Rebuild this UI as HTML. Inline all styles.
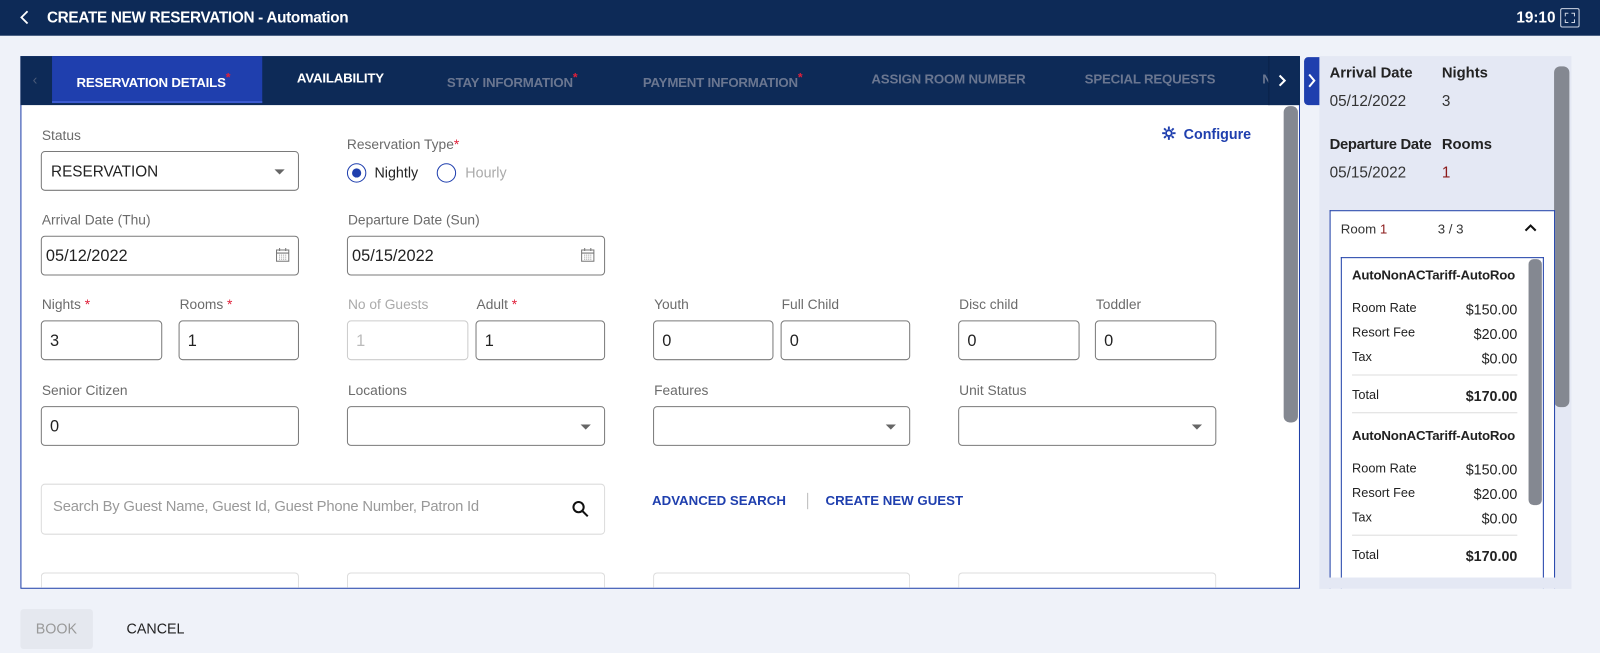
<!DOCTYPE html>
<html><head><style>
*{box-sizing:border-box;margin:0;padding:0}
body{width:1600px;height:653px;background:#eff2f9;font-family:"Liberation Sans",sans-serif;position:relative;overflow:hidden;color:#222}
#w{position:absolute;left:0;top:0;width:1568px;height:640px;transform:scale(1.0204);transform-origin:0 0}
.a{position:absolute}
.hdr{left:0;top:0;width:1600px;height:35px;background:#0d2a57}
.lbl{position:absolute;font-size:13.5px;color:#6b6b6b;white-space:nowrap;margin-top:1px}
.req{color:#e0203a}
.inp{position:absolute;height:39px;border:1px solid #7a7a7a;border-radius:4px;background:#fff;font-size:16px;padding:11px 8px 0;color:#222}
.dd:after{content:"";position:absolute;right:13px;top:17px;border:5px solid transparent;border-top:5px solid #666}
.tab{position:absolute;top:69px;font-size:13px;font-weight:bold;color:#6a7690;white-space:nowrap;letter-spacing:-0.2px}
.tab sup{color:#e0203a;font-size:12px}
.row{display:flex;justify-content:space-between;font-size:12.5px;color:#222;margin-bottom:8px}
</style></head><body><div id="w">
<div class="a hdr"></div>
<svg class="a" style="left:18px;top:9px" width="12" height="16"><path d="M9 2L3 8l6 6" stroke="#fff" stroke-width="1.8" fill="none"/></svg>
<div class="a" style="left:46px;top:9px;color:#fff;font-size:15px;font-weight:bold;letter-spacing:-0.3px">CREATE NEW RESERVATION - Automation</div>
<div class="a" style="left:1486px;top:9px;color:#fff;font-size:15px;font-weight:bold">19:10</div>
<div class="a" style="left:1529px;top:8px;width:19px;height:19px;border:1px solid #cfd6e4;border-radius:2px"></div>
<svg class="a" style="left:1533px;top:12px" width="11" height="11"><path d="M1 4V1h3M7 1h3v3M10 7v3H7M4 10H1V7" stroke="#cfd6e4" stroke-width="1" fill="none"/></svg>

<div class="a" style="left:20px;top:55px;width:1254px;height:522px;border:1px solid #1e3fa8;background:#fff"></div>
<div class="a" style="left:20px;top:55px;width:1254px;height:48px;background:#0d2a57"></div>
<div class="a" style="left:32px;top:70px;color:#4a5a78;font-size:14px">‹</div>
<div class="a" style="left:51px;top:55px;width:206px;height:46px;background:#1f3fae;border-bottom:2px solid #3c5bd0"></div>
<div class="tab" style="left:75px;color:#fff">RESERVATION DETAILS<sup>*</sup></div>
<div class="tab" style="left:291px;top:69px;color:#fff">AVAILABILITY</div>
<div class="tab" style="left:438px">STAY INFORMATION<sup>*</sup></div>
<div class="tab" style="left:630px">PAYMENT INFORMATION<sup>*</sup></div>
<div class="tab" style="left:854px;top:70px">ASSIGN ROOM NUMBER</div>
<div class="tab" style="left:1063px;top:70px">SPECIAL REQUESTS</div>
<div class="tab" style="left:1237px;top:70px">N</div>
<div class="a" style="left:1243px;top:55px;width:30px;height:48px;background:#0d2a57;border-left:1px solid #0a2248"></div>
<svg class="a" style="left:1252px;top:72px" width="10" height="14"><path d="M2 2l5 5-5 5" stroke="#fff" stroke-width="2" fill="none"/></svg>
<div class="a" style="left:1258px;top:104px;width:14px;height:310px;background:#848891;border-radius:6px"></div>

<div class="lbl" style="left:41px;top:124px">Status</div>
<div class="inp dd" style="left:40px;top:148px;width:253px;font-size:15px;padding:11px 9px 0">RESERVATION</div>
<div class="lbl" style="left:340px;top:133px">Reservation Type<span class="req">*</span></div>
<div class="a" style="left:340px;top:160px;width:19px;height:19px;border:1.5px solid #1f3fae;border-radius:50%"></div>
<div class="a" style="left:345px;top:165px;width:9px;height:9px;background:#1f3fae;border-radius:50%"></div>
<div class="a" style="left:367px;top:161px;font-size:14px">Nightly</div>
<div class="a" style="left:428px;top:160px;width:19px;height:19px;border:1.5px solid #1f3fae;border-radius:50%"></div>
<div class="a" style="left:456px;top:161px;font-size:14px;color:#aaa">Hourly</div>
<svg class="a" style="left:1138px;top:123px" width="15" height="15" viewBox="0 0 16 16"><circle cx="8" cy="8" r="3" stroke="#1f3fae" stroke-width="2" fill="none"/><path d="M8 1v3M8 12v3M1 8h3M12 8h3M3 3l2 2M11 11l2 2M13 3l-2 2M3 13l2-2" stroke="#1f3fae" stroke-width="2"/></svg>
<div class="a" style="left:1160px;top:123px;font-size:14px;font-weight:bold;color:#1f3fae">Configure</div>

<div class="lbl" style="left:41px;top:207px">Arrival Date (Thu)</div>
<div class="inp" style="left:40px;top:231px;width:253px;padding:11px 4px 0">05/12/2022</div>
<div class="lbl" style="left:341px;top:207px">Departure Date (Sun)</div>
<div class="inp" style="left:340px;top:231px;width:253px;padding:11px 4px 0">05/15/2022</div>
<svg class="a" style="left:270px;top:242px" width="14" height="15"><rect x="1" y="3" width="12" height="11" fill="none" stroke="#777"/><path d="M1 6h12M4 1v3M10 1v3" stroke="#777"/><path d="M3.5 8h7M3.5 10h7M3.5 12h7" stroke="#999" stroke-dasharray="1 1"/></svg>
<svg class="a" style="left:569px;top:242px" width="14" height="15"><rect x="1" y="3" width="12" height="11" fill="none" stroke="#777"/><path d="M1 6h12M4 1v3M10 1v3" stroke="#777"/><path d="M3.5 8h7M3.5 10h7M3.5 12h7" stroke="#999" stroke-dasharray="1 1"/></svg>

<div class="lbl" style="left:41px;top:290px">Nights <span class="req">*</span></div>
<div class="lbl" style="left:176px;top:290px">Rooms <span class="req">*</span></div>
<div class="lbl" style="left:341px;top:290px;color:#aaa">No of Guests</div>
<div class="lbl" style="left:467px;top:290px">Adult <span class="req">*</span></div>
<div class="lbl" style="left:641px;top:290px">Youth</div>
<div class="lbl" style="left:766px;top:290px">Full Child</div>
<div class="lbl" style="left:940px;top:290px">Disc child</div>
<div class="lbl" style="left:1074px;top:290px">Toddler</div>
<div class="inp" style="left:40px;top:314px;width:119px">3</div>
<div class="inp" style="left:175px;top:314px;width:118px">1</div>
<div class="inp" style="left:340px;top:314px;width:119px;border-color:#ccc;color:#bbb">1</div>
<div class="inp" style="left:466px;top:314px;width:127px">1</div>
<div class="inp" style="left:640px;top:314px;width:118px">0</div>
<div class="inp" style="left:765px;top:314px;width:127px">0</div>
<div class="inp" style="left:939px;top:314px;width:119px">0</div>
<div class="inp" style="left:1073px;top:314px;width:119px">0</div>

<div class="lbl" style="left:41px;top:374px">Senior Citizen</div>
<div class="lbl" style="left:341px;top:374px">Locations</div>
<div class="lbl" style="left:641px;top:374px">Features</div>
<div class="lbl" style="left:940px;top:374px">Unit Status</div>
<div class="inp" style="left:40px;top:398px;width:253px">0</div>
<div class="inp dd" style="left:340px;top:398px;width:253px"></div>
<div class="inp dd" style="left:640px;top:398px;width:252px"></div>
<div class="inp dd" style="left:939px;top:398px;width:253px"></div>

<div class="a" style="left:40px;top:474px;width:553px;height:50px;border:1px solid #dcdcdc;border-radius:4px"></div>
<div class="a" style="left:52px;top:489px;font-size:14.5px;color:#999;letter-spacing:-0.2px">Search By Guest Name, Guest Id, Guest Phone Number, Patron Id</div>
<svg class="a" style="left:560px;top:490px" width="18" height="18"><circle cx="7" cy="7" r="5" stroke="#111" stroke-width="2" fill="none"/><path d="M11 11l5 5" stroke="#111" stroke-width="2"/></svg>
<div class="a" style="left:639px;top:483px;font-size:13px;font-weight:bold;color:#1f3fae">ADVANCED SEARCH</div>
<div class="a" style="left:791px;top:483px;width:1px;height:16px;background:#bbb"></div>
<div class="a" style="left:809px;top:483px;font-size:13px;font-weight:bold;color:#1f3fae">CREATE NEW GUEST</div>
<div class="a" style="left:40px;top:561px;width:253px;height:15px;border:1px solid #ddd;border-bottom:0;border-radius:4px 4px 0 0"></div>
<div class="a" style="left:340px;top:561px;width:253px;height:15px;border:1px solid #ddd;border-bottom:0;border-radius:4px 4px 0 0"></div>
<div class="a" style="left:640px;top:561px;width:252px;height:15px;border:1px solid #ddd;border-bottom:0;border-radius:4px 4px 0 0"></div>
<div class="a" style="left:939px;top:561px;width:253px;height:15px;border:1px solid #ddd;border-bottom:0;border-radius:4px 4px 0 0"></div>

<div class="a" style="left:20px;top:597px;width:71px;height:39px;background:#e5e8ef;border-radius:3px"></div>
<div class="a" style="left:35px;top:608px;font-size:14px;color:#999">BOOK</div>
<div class="a" style="left:124px;top:608px;font-size:14px;color:#222">CANCEL</div>

<div class="a" style="left:1278px;top:56px;width:16px;height:47px;background:#1f3fae;border-radius:4px 0 0 4px"></div>
<svg class="a" style="left:1281px;top:71px" width="10" height="16"><path d="M2 2l5 6-5 6" stroke="#fff" stroke-width="2" fill="none"/></svg>
<div class="a" style="left:1293px;top:55px;width:247px;height:522px;background:#e4e8f4"></div>
<div class="a" style="left:1523px;top:65px;width:15px;height:334px;background:#848891;border-radius:6px"></div>
<div class="a" style="left:1303px;top:64px;font-size:14.5px;font-weight:bold">Arrival Date</div>
<div class="a" style="left:1413px;top:64px;font-size:14.5px;font-weight:bold">Nights</div>
<div class="a" style="left:1303px;top:91px;font-size:15px;color:#333">05/12/2022</div>
<div class="a" style="left:1413px;top:91px;font-size:15px;color:#333">3</div>
<div class="a" style="left:1303px;top:134px;font-size:14.5px;font-weight:bold;letter-spacing:-0.3px">Departure Date</div>
<div class="a" style="left:1413px;top:134px;font-size:14.5px;font-weight:bold">Rooms</div>
<div class="a" style="left:1303px;top:161px;font-size:15px;color:#333">05/15/2022</div>
<div class="a" style="left:1413px;top:161px;font-size:15px;color:#8b1a1a">1</div>
<div class="a" style="left:1303px;top:206px;width:221px;height:371px;background:#fff;border:1px solid #1e3fa8;border-bottom:0"></div>
<div class="a" style="left:1314px;top:217px;font-size:13px;color:#333">Room <span style="color:#8b1a1a">1</span></div>
<div class="a" style="left:1409px;top:217px;font-size:13px;color:#333">3 / 3</div>
<svg class="a" style="left:1494px;top:219px" width="12" height="9"><path d="M1 7l5-5 5 5" stroke="#111" stroke-width="2" fill="none"/></svg>
<div class="a" style="left:1314px;top:252px;width:199px;height:325px;border:1px solid #1e3fa8;border-bottom:0"></div>
<div class="a" style="left:1498px;top:254px;width:13px;height:241px;background:#848891;border-radius:5px"></div>
<div class="a" style="left:1325px;top:262px;width:162px">
<div style="font-size:13px;font-weight:bold;margin-bottom:18px;white-space:nowrap;letter-spacing:-0.2px">AutoNonACTariff-AutoRoo</div>
<div class="row"><span>Room Rate</span><span style="font-size:14px">$150.00</span></div>
<div class="row"><span>Resort Fee</span><span style="font-size:14px">$20.00</span></div>
<div class="row"><span>Tax</span><span style="font-size:14px">$0.00</span></div>
<div style="border-top:1px solid #ddd;margin:6px 0 12px"></div>
<div class="row"><span>Total</span><span style="font-size:14px;font-weight:bold">$170.00</span></div>
<div style="border-top:1px solid #ddd;margin:4px 0 14px"></div>
<div style="font-size:13px;font-weight:bold;margin-bottom:18px;white-space:nowrap;letter-spacing:-0.2px">AutoNonACTariff-AutoRoo</div>
<div class="row"><span>Room Rate</span><span style="font-size:14px">$150.00</span></div>
<div class="row"><span>Resort Fee</span><span style="font-size:14px">$20.00</span></div>
<div class="row"><span>Tax</span><span style="font-size:14px">$0.00</span></div>
<div style="border-top:1px solid #ddd;margin:6px 0 12px"></div>
<div class="row"><span>Total</span><span style="font-size:14px;font-weight:bold">$170.00</span></div>
</div>
<div class="a" style="left:1293px;top:566px;width:247px;height:11px;background:#e4e8f4"></div>
</div></body></html>
